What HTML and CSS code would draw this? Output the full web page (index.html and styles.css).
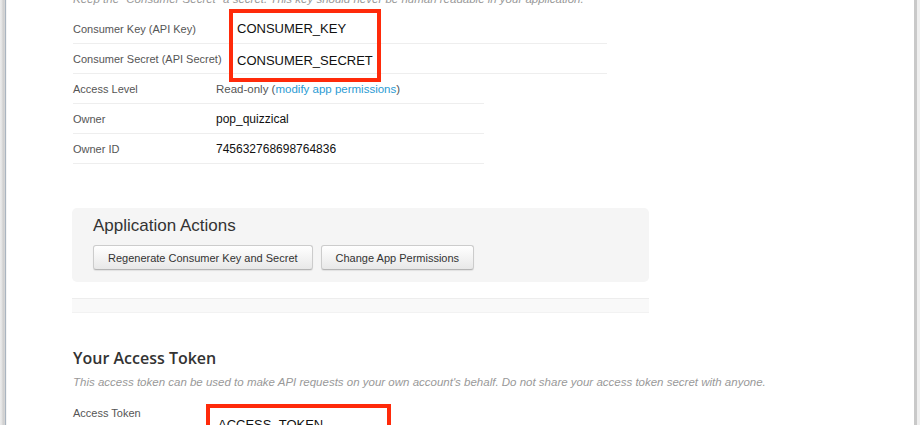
FILE: index.html
```html
<!DOCTYPE html>
<html lang="en">
<head>
  <meta charset="UTF-8">
  <meta name="viewport" content="width=device-width, initial-scale=1.0">
  <title>Keys and Access Tokens</title>
  <link rel="stylesheet" href="styles.css">
</head>
<body>
  <div class="window">
    <div class="edge-left"></div>
    <main class="page">
      <p class="note">Keep the "Consumer Secret" a secret. This key should never be human readable in your application.</p>

      <div class="keys">
        <!-- annotation box round the two keys -->
        <div class="mark mark-keys"></div>
        <div class="row wide">
          <span class="label">Consumer Key (API Key)</span>
          <span class="value key">CONSUMER_KEY</span>
        </div>
        <div class="row wide">
          <span class="label">Consumer Secret (API Secret)</span>
          <span class="value key low">CONSUMER_SECRET</span>
        </div>
        <div class="row">
          <span class="label">Access Level</span>
          <span class="value plain">Read-only (<a href="#">modify app permissions</a>)</span>
        </div>
        <div class="row">
          <span class="label">Owner</span>
          <span class="value">pop_quizzical</span>
        </div>
        <div class="row">
          <span class="label">Owner ID</span>
          <span class="value">745632768698764836</span>
        </div>
      </div>

      <section class="actions">
        <h2>Application Actions</h2>
        <div class="buttons">
          <button>Regenerate Consumer Key and Secret</button>
          <button>Change App Permissions</button>
        </div>
      </section>

      <div class="band"></div>

      <h3>Your Access Token</h3>
      <p class="hint">This access token can be used to make API requests on your own account's behalf. Do not share your access token secret with anyone.</p>

      <div class="keys token">
        <div class="mark mark-token"></div>
        <div class="row">
          <span class="label">Access Token</span>
          <span class="value key">ACCESS_TOKEN</span>
        </div>
      </div>
    </main>
    <div class="edge-right"></div>
  </div>
</body>
</html>
```

FILE: styles.css
```css
html, body {
  margin: 0;
  height: 100%;
  overflow: hidden;
  background: #fff;
}
body {
  font-family: "Liberation Sans", Arial, sans-serif;
  color: #333;
}
.window {
  display: flex;
  height: 425px;
}
.edge-left {
  width: 7px;
  flex: none;
  background: linear-gradient(to right, #ececec 0, #e2e2e2 2px, #cfcfcf 3px, #d6d6d6 5px, #a9b4c0 5px, #a9b4c0 6px, #f4f4f4 6px);
}
.edge-right {
  width: 6px;
  flex: none;
  background: linear-gradient(to right, #c9c9c9 0, #c9c9c9 3px, #efefef 3px);
}
.page {
  flex: 1;
  padding-left: 66px;
  overflow: hidden;
}
.note {
  margin: -8px 0 0;
  font-size: 11.5px;
  line-height: 14px;
  font-style: italic;
  color: #999;
  white-space: nowrap;
}
.keys {
  position: relative;
  margin-top: 8px;
}
.row {
  display: flex;
  align-items: center;
  width: 411px;
  height: 29px;
  border-bottom: 1px solid #eee;
  white-space: nowrap;
}
.row.wide { width: 534px; }
.label {
  width: 143px;
  flex: none;
  font-size: 11px;
  color: #555;
}
.value {
  font-size: 12px;
  color: #111;
}
.value.key {
  font-size: 13px;
  padding-left: 21px;
}
.value.low {
  position: relative;
  top: 2px;
}
.value.plain {
  font-size: 11.5px;
  color: #555;
}
.value a {
  color: #2b9bd3;
  text-decoration: none;
}
.mark {
  position: absolute;
  box-sizing: border-box;
  border: 4px solid #ff2a0a;
}
.mark-keys {
  left: 156px;
  top: -5px;
  width: 152px;
  height: 73px;
}
.actions {
  margin: 44px 0 0 -1px;
  width: 577px;
  box-sizing: border-box;
  padding: 8px 21px 12px;
  background: #f5f5f5;
  border-radius: 5px;
}
.actions h2 {
  margin: 0;
  font-size: 17px;
  line-height: 20px;
  font-weight: normal;
  color: #333;
}
.buttons {
  display: flex;
  gap: 8px;
  margin-top: 9px;
}
button {
  height: 25px;
  padding: 0 14px;
  font-family: "Liberation Sans", Arial, sans-serif;
  font-size: 11px;
  color: #333;
  background: linear-gradient(to bottom, #fff, #e8e8e8);
  border: 1px solid #ccc;
  border-bottom-color: #b5b5b5;
  border-radius: 3px;
  box-shadow: 0 1px 1px rgba(0,0,0,0.08);
}
.band {
  margin: 16px 0 0 -1px;
  width: 577px;
  height: 13px;
  background: #f9f9f9;
  border-top: 1px solid #ededed;
  border-bottom: 1px solid #f2f2f2;
}
h3 {
  margin: 34px 0 0;
  font-family: "Open Sans", "Liberation Sans", sans-serif;
  font-size: 16px;
  line-height: 22px;
  font-weight: 600;
  color: #333;
}
.hint {
  margin: 6px 0 0;
  font-size: 11.5px;
  line-height: 14px;
  font-style: italic;
  color: #999;
  white-space: nowrap;
}
.token {
  margin-top: 9px;
}
.token .row { border-bottom: none; }
.mark-token {
  left: 133px;
  top: 6px;
  width: 185px;
  height: 60px;
}
.token .value.key {
  padding-left: 2px;
  position: relative;
  top: 12px;
}
```
